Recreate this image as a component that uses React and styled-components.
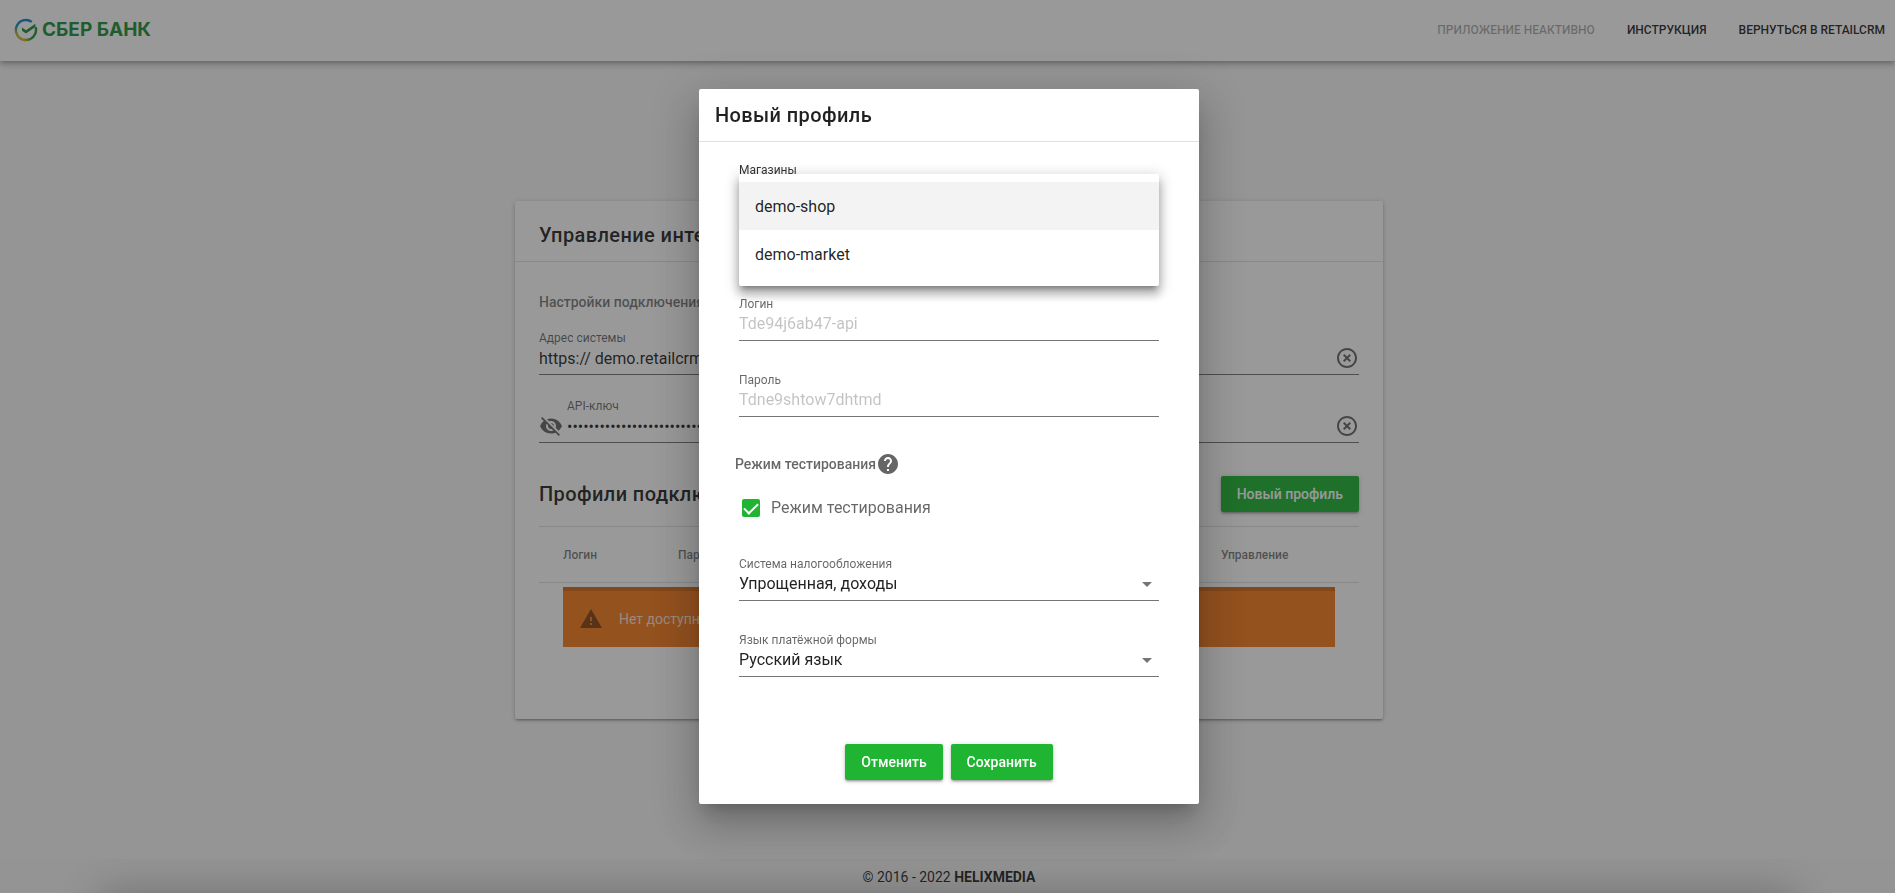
import React from "react";
import styled, { createGlobalStyle } from "styled-components";
import { MdVisibilityOff, MdHelp, MdWarning, MdHighlightOff } from "react-icons/md";

const App = () => {
  return (
    <Page>
      <GlobalStyle />
      <Header>
        <Logo />
        <Nav>
          <NavLink href="#status" $muted>
            Приложение неактивно
          </NavLink>
          <NavLink href="#manual">Инструкция</NavLink>
          <NavLink href="#back">Вернуться в RetailCRM</NavLink>
        </Nav>
      </Header>
      <Main>
        <Settings />
      </Main>
      <Footer>
        © 2016 - 2022&nbsp;<b>HELIXMEDIA</b>
      </Footer>
      <Backdrop>
        <ProfileDialog />
      </Backdrop>
    </Page>
  );
};

const Logo = () => (
  <LogoLink href="#home" aria-label="Сбер Банк">
    <svg width="24" height="24" viewBox="0 0 24 24" fill="none">
      <defs>
        <linearGradient id="ringLeft" x1="0" y1="0" x2="0" y2="1">
          <stop offset="0" stopColor="#0f7fd0" />
          <stop offset="0.35" stopColor="#2191a8" />
          <stop offset="0.65" stopColor="#a5b82e" />
          <stop offset="1" stopColor="#c8b820" />
        </linearGradient>
        <linearGradient id="ringRight" x1="0" y1="1" x2="1" y2="0">
          <stop offset="0" stopColor="#c8b820" />
          <stop offset="0.4" stopColor="#21913a" />
          <stop offset="1" stopColor="#21913a" />
        </linearGradient>
      </defs>
      <path d="M17.800 3.900A10 10 0 1 0 11 21.950" stroke="url(#ringLeft)" strokeWidth="2.4" />
      <path d="M10 21.800A10 10 0 0 0 21.600 9.200" stroke="url(#ringRight)" strokeWidth="2.4" />
      <path d="M8 9.500v3.300l4 2.700L21.400 9V5.700L12 12.200z" fill="#21913a" />
    </svg>
    <LogoText>СБЕР БАНК</LogoText>
  </LogoLink>
);

const Settings = () => (
  <Card>
    <CardTitle>Управление интеграцией</CardTitle>
    <CardBody>
      <SectionLabel>Настройки подключения</SectionLabel>
      <SystemField>
        <div>
          <Label htmlFor="address">Адрес системы</Label>
          <Input id="address" defaultValue="https:// demo.retailcrm.ru" />
        </div>
        <IconButton type="button" aria-label="Очистить адрес">
          <MdHighlightOff />
        </IconButton>
      </SystemField>
      <SystemField>
        <IconButton type="button" aria-label="Показать ключ">
          <MdVisibilityOff />
        </IconButton>
        <div>
          <Label htmlFor="apiKey">API-ключ</Label>
          <Input id="apiKey" type="password" defaultValue="00000000000000000000000000000000" />
        </div>
        <IconButton type="button" aria-label="Очистить ключ">
          <MdHighlightOff />
        </IconButton>
      </SystemField>
      <ProfilesHead>
        <h2>Профили подключения</h2>
        <Button type="button">Новый профиль</Button>
      </ProfilesHead>
      <Table>
        <thead>
          <tr>
            <th>Логин</th>
            <th>Пароль</th>
            <th>Магазины</th>
            <th>Управление</th>
          </tr>
        </thead>
      </Table>
      <Alert>
        <MdWarning />
        Нет доступных профилей
      </Alert>
    </CardBody>
  </Card>
);

const ProfileDialog = () => (
  <Dialog role="dialog" aria-labelledby="dialogTitle">
    <DialogTitle id="dialogTitle">Новый профиль</DialogTitle>
    <DialogBody>
      <ShopField>
        <Label as="span" $dark>
          Магазины
        </Label>
        <Menu role="listbox" aria-label="Магазины">
          <Option role="option" aria-selected="true" $active>
            demo-shop
          </Option>
          <Option role="option" aria-selected="false">
            demo-market
          </Option>
        </Menu>
      </ShopField>
      <Field>
        <Label htmlFor="login">Логин</Label>
        <Input id="login" placeholder="Tde94j6ab47-api" />
      </Field>
      <Field>
        <Label htmlFor="password">Пароль</Label>
        <Input id="password" placeholder="Tdne9shtow7dhtmd" />
      </Field>
      <TestMode>
        Режим тестирования
        <MdHelp />
      </TestMode>
      <CheckRow>
        <Checkbox type="checkbox" defaultChecked />
        Режим тестирования
      </CheckRow>
      <Field>
        <Label htmlFor="tax">Система налогообложения</Label>
        <SelectWrap>
          <Select id="tax">
            <option>Упрощенная, доходы</option>
          </Select>
        </SelectWrap>
      </Field>
      <Field>
        <Label htmlFor="lang">Язык платёжной формы</Label>
        <SelectWrap>
          <Select id="lang">
            <option>Русский язык</option>
          </Select>
        </SelectWrap>
      </Field>
    </DialogBody>
    <Actions>
      <Button type="button">Отменить</Button>
      <Button type="button">Сохранить</Button>
    </Actions>
  </Dialog>
);

const GlobalStyle = createGlobalStyle`
  * {
    box-sizing: border-box;
  }
  body {
    margin: 0;
    font-family: Roboto, "Liberation Sans", sans-serif;
    color: rgba(0, 0, 0, 0.87);
    background: #f7f7f7;
  }
  h1, h2, p {
    margin: 0;
  }
  button, input, select {
    font-family: inherit;
    color: inherit;
  }
`;

const Page = styled.div`
  display: flex;
  flex-direction: column;
  min-height: 100vh;
  overflow: hidden;
`;

const Header = styled.header`
  display: flex;
  align-items: center;
  justify-content: space-between;
  height: 61px;
  padding: 0 10px 2px 14px;
  background: white;
  box-shadow: 0 2px 4px -1px rgba(0, 0, 0, 0.2), 0 4px 5px rgba(0, 0, 0, 0.14),
    0 1px 10px rgba(0, 0, 0, 0.12);
`;

const LogoLink = styled.a`
  display: flex;
  align-items: center;
  gap: 4px;
  color: #21913a;
  text-decoration: none;
`;

const LogoText = styled.span`
  font-family: Inter, "Open Sans", sans-serif;
  font-size: 19px;
  font-weight: 700;
  line-height: 22px;
`;

const Nav = styled.nav`
  display: flex;
  gap: 32px;
`;

const NavLink = styled.a`
  font-size: 12px;
  font-weight: 500;
  text-transform: uppercase;
  text-decoration: none;
  color: ${({ $muted }) => ($muted ? "rgba(0, 0, 0, 0.34)" : "inherit")};
`;

const Main = styled.main`
  flex: 1;
  display: flex;
  align-items: center;
  justify-content: center;
  padding-left: 3px;
`;

const Card = styled.section`
  width: 868px;
  max-width: 100%;
  border-radius: 2px;
  background: white;
  box-shadow: 0 1px 5px rgba(0, 0, 0, 0.2), 0 2px 2px rgba(0, 0, 0, 0.14),
    0 3px 1px -2px rgba(0, 0, 0, 0.12);
`;

const CardTitle = styled.h1`
  padding: 8px 24px 0;
  border-bottom: 1px solid rgba(0, 0, 0, 0.12);
  font-size: 20px;
  font-weight: 500;
  line-height: 52px;
  letter-spacing: 0.02em;
`;

const CardBody = styled.div`
  padding: 30px 24px 72px;
`;

const SectionLabel = styled.p`
  margin-bottom: 18px;
  font-size: 14px;
  font-weight: 500;
  line-height: 20px;
  color: rgba(0, 0, 0, 0.54);
`;

const Label = styled.label`
  display: block;
  font-size: 12px;
  line-height: 16px;
  color: ${({ $dark }) => ($dark ? "rgba(0, 0, 0, 0.8)" : "rgba(0, 0, 0, 0.6)")};
`;

const Input = styled.input`
  display: block;
  width: 100%;
  height: 29px;
  padding: 0 0 6px;
  border: 0;
  border-bottom: 1px solid rgba(0, 0, 0, 0.54);
  outline: 0;
  background: none;
  font-size: 16px;
  &::placeholder {
    color: rgba(0, 0, 0, 0.24);
  }
`;

const SystemField = styled.div`
  display: flex;
  align-items: flex-end;
  gap: 4px;
  margin-bottom: 23px;
  border-bottom: 1px solid rgba(0, 0, 0, 0.54);
  > div {
    flex: 1;
  }
  ${Input} {
    height: 28px;
    padding-bottom: 4px;
    border-bottom: 0;
  }
`;

const IconButton = styled.button`
  display: flex;
  padding: 0;
  margin-bottom: 4px;
  border: 0;
  background: none;
  font-size: 24px;
  color: rgba(0, 0, 0, 0.6);
`;

const ProfilesHead = styled.div`
  display: flex;
  align-items: center;
  justify-content: space-between;
  margin: 33px 0 14px;
  h2 {
    font-size: 20px;
    font-weight: 500;
    letter-spacing: 0.02em;
  }
`;

const Button = styled.button`
  height: 36px;
  padding: 0 16px;
  border: 0;
  border-radius: 2px;
  background: #1fb432;
  color: white;
  font-size: 14px;
  font-weight: 500;
  box-shadow: 0 1px 5px rgba(0, 0, 0, 0.2), 0 2px 2px rgba(0, 0, 0, 0.14),
    0 3px 1px -2px rgba(0, 0, 0, 0.12);
`;

const Table = styled.table`
  width: 100%;
  border-collapse: collapse;
  table-layout: fixed;
  th {
    height: 56px;
    padding: 0 0 0 24px;
    border-top: 1px solid rgba(0, 0, 0, 0.12);
    border-bottom: 1px solid rgba(0, 0, 0, 0.12);
    font-size: 12px;
    font-weight: 500;
    text-align: left;
    color: rgba(0, 0, 0, 0.54);
  }
  th:first-child {
    width: 115px;
  }
  th:last-child {
    width: 162px;
  }
`;

const Alert = styled.div`
  display: flex;
  align-items: center;
  gap: 16px;
  height: 60px;
  margin: 4px 24px 0;
  padding: 0 16px;
  border-top: 4px solid #d56a18;
  background: #f67c1f;
  color: rgba(255, 255, 255, 0.8);
  font-size: 14px;
  svg {
    font-size: 24px;
    color: rgba(0, 0, 0, 0.45);
  }
`;

const Footer = styled.footer`
  position: relative;
  overflow: hidden;
  display: flex;
  align-items: center;
  justify-content: center;
  height: 34px;
  padding: 2px 0 0 3px;
  background: #f5f5f5;
  font-size: 14px;
  b {
    font-weight: 700;
  }
  /* soft shade rising from the bottom edge */
  &::after {
    content: "";
    position: absolute;
    top: 100%;
    left: 100px;
    right: 100px;
    height: 60px;
    box-shadow: 0 0 40px rgba(0, 0, 0, 0.27);
  }
`;

const Backdrop = styled.div`
  position: fixed;
  inset: 0;
  display: flex;
  align-items: center;
  justify-content: center;
  padding-left: 3px;
  background: rgba(33, 33, 33, 0.46);
`;

const Dialog = styled.div`
  width: 500px;
  border-radius: 2px;
  background: white;
  box-shadow: 0 11px 15px -7px rgba(0, 0, 0, 0.2), 0 24px 38px 3px rgba(0, 0, 0, 0.14),
    0 9px 46px 8px rgba(0, 0, 0, 0.12);
`;

const DialogTitle = styled.h2`
  padding: 0 16px;
  border-bottom: 1px solid rgba(0, 0, 0, 0.12);
  font-size: 20px;
  font-weight: 500;
  line-height: 52px;
  letter-spacing: 0.02em;
`;

const DialogBody = styled.div`
  padding: 20px 36px 0;
`;

const Field = styled.div`
  margin: 0 4px 31px;
`;

const ShopField = styled(Field)`
  position: relative;
  height: 103px;
`;

const Menu = styled.div`
  position: absolute;
  z-index: 1;
  top: 12px;
  left: 0;
  right: 0;
  padding: 8px 0;
  border-radius: 2px;
  background: white;
  box-shadow: 0 5px 5px -3px rgba(0, 0, 0, 0.3), 0 8px 10px 1px rgba(0, 0, 0, 0.22),
    0 3px 14px 2px rgba(0, 0, 0, 0.18);
`;

const Option = styled.div`
  padding: 2px 16px 0;
  font-size: 16px;
  line-height: 46px;
  background: ${({ $active }) => ($active ? "#f3f3f3" : "white")};
`;

const TestMode = styled.div`
  display: flex;
  align-items: center;
  margin-top: 35px;
  font-size: 14px;
  font-weight: 500;
  color: rgba(0, 0, 0, 0.6);
  svg {
    font-size: 24px;
  }
`;

const CheckRow = styled.label`
  display: flex;
  align-items: center;
  gap: 11px;
  margin: 22px 0 38px 7px;
  font-size: 16px;
  line-height: 20px;
  color: rgba(0, 0, 0, 0.6);
`;

const Checkbox = styled.input`
  appearance: none;
  display: grid;
  place-items: center;
  width: 18px;
  height: 18px;
  margin: 0;
  border-radius: 2px;
  background: #1fb432;
  &:checked::after {
    content: "";
    width: 6px;
    height: 12px;
    margin-bottom: 3px;
    border: solid white;
    border-width: 0 2px 2px 0;
    transform: rotate(45deg);
  }
`;

const SelectWrap = styled.div`
  display: flex;
  align-items: center;
  padding-bottom: 4px;
  border-bottom: 1px solid rgba(0, 0, 0, 0.54);
  &::after {
    content: "";
    margin: 0 7px 0 -17px;
    border: 5px solid transparent;
    border-top-color: rgba(0, 0, 0, 0.54);
    border-bottom: 0;
    pointer-events: none;
  }
`;

const Select = styled.select`
  appearance: none;
  flex: 1;
  height: 24px;
  padding: 0 0 2px;
  border: 0;
  background: none;
  font-size: 16px;
`;

const Actions = styled.div`
  display: flex;
  justify-content: center;
  gap: 8px;
  padding: 36px 0 24px;
`;

export default App;
